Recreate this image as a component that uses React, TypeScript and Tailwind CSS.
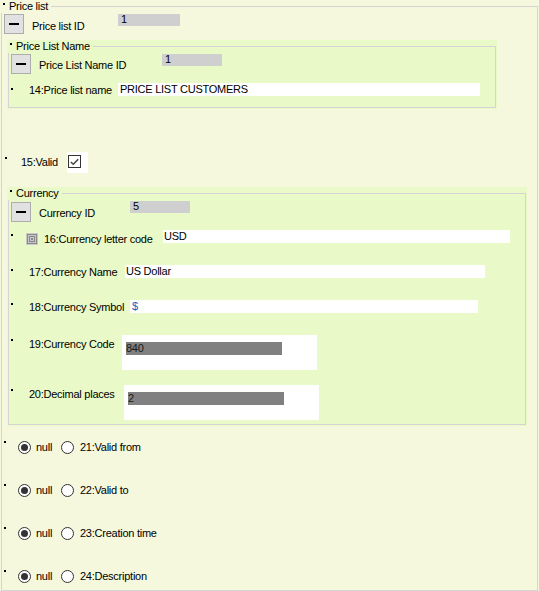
import React from "react";

const Dot = ({ className = "" }: { className?: string }) => (
  <span className={`block w-[2px] h-[2px] bg-black ${className}`} />
);

function Legend({ text, bg }: { text: string; bg: string }) {
  return (
    <div className={`absolute top-0 left-0 flex items-start h-[13px] pr-[3px] ${bg}`}>
      <Dot className="ml-[3px] mt-[3px]" />
      <span className="ml-[4px] leading-[13px]">{text}</span>
    </div>
  );
}

function MinusButton() {
  return (
    <div className="w-[20px] h-[20px] shrink-0 border border-[#adadad] bg-[#e1e1e1] flex items-center justify-center">
      <span className="block w-[10px] h-[2px] bg-black" />
    </div>
  );
}

function IdBox({ value, w }: { value: string; w: string }) {
  return (
    <div className={`${w} h-[12px] bg-[#cfcfcf] pl-[3px] leading-[11px]`}>{value}</div>
  );
}

function Radio({ checked }: { checked?: boolean }) {
  return (
    <span className="w-[13px] h-[13px] shrink-0 rounded-full border border-[#333] bg-white flex items-center justify-center">
      {checked && <span className="block w-[7px] h-[7px] rounded-full bg-[#333]" />}
    </span>
  );
}

function NullRow({ label, first }: { label: string; first?: boolean }) {
  return (
    <div className={`flex items-start h-[14px] ${first ? "mt-[15px]" : "mt-[29px]"}`}>
      <div className="ml-[2px] w-[14px]">
        <Dot />
      </div>
      <Radio checked />
      <span className="w-[30px] pl-[5px] leading-[13px]">null</span>
      <Radio />
      <span className="pl-[6px] leading-[13px]">{label}</span>
    </div>
  );
}

function NumBox({ value }: { value: string }) {
  return (
    <div className="w-[195px] h-[35px] bg-white pt-[7px] pl-[4px]">
      <div className="w-[156px] h-[13px] bg-[#808080] leading-[13px] text-[#1a1a1a]">{value}</div>
    </div>
  );
}

export default function App() {
  return (
    <div className="w-[539px] h-[591px] overflow-hidden bg-[#f5f8dc] font-['Liberation_Sans',Arial,sans-serif] text-[11px] tracking-[-0.25px] text-black">
      {/* Price list group */}
      <div className="relative pt-[6px] pl-px">
        <div className="w-[537px] h-[585px] border border-[#d4d4d4]">
          <div className="flex items-start h-[20px] mt-[7px]">
            <div className="ml-[2px]">
              <MinusButton />
            </div>
            <div className="w-[94px] pl-[8px] self-center pt-[4px]">Price list ID</div>
            <IdBox value="1" w="w-[62px]" />
          </div>

          {/* Price List Name */}
          <div className="relative ml-[5px] mt-[6px] w-[490px] bg-[#e9f9c7] pt-[6px] px-px pb-px">
            <div className="h-[62px] border border-[#d4d4d4]">
              <div className="flex items-start h-[20px] mt-[7px]">
                <div className="ml-[2px]">
                  <MinusButton />
                </div>
                <div className="w-[131px] pl-[8px] self-center pt-[3px]">Price List Name ID</div>
                <IdBox value="1" w="w-[60px]" />
              </div>
              <div className="flex items-start h-[13px] mt-[9px]">
                <div className="ml-[2px] w-[18px]">
                  <Dot className="mt-[5px]" />
                </div>
                <div className="w-[89px] leading-[13px] pt-[1px]">14:Price list name</div>
                <div className="w-[362px] h-[13px] bg-white pl-[2px] leading-[13px]">PRICE LIST CUSTOMERS</div>
              </div>
            </div>
            <Legend text="Price List Name" bg="bg-[#e9f9c7]" />
          </div>

          {/* Valid */}
          <div className="flex items-center h-[21px] mt-[43px]">
            <div className="ml-[3px] w-[16px] self-start">
              <Dot className="mt-[5px]" />
            </div>
            <div className="w-[46px] leading-[13px]">15:Valid</div>
            <div className="w-[21px] h-[21px] bg-white pl-px pt-[3px]">
              <div className="w-[13px] h-[13px] border border-[#333] bg-white flex items-center justify-center">
                <svg width="9" height="8" viewBox="0 0 9 8">
                  <polyline points="0.8,4 3.3,6.3 8.2,1.2" fill="none" stroke="#444" strokeWidth="1.5" />
                </svg>
              </div>
            </div>
          </div>

          {/* Currency */}
          <div className="relative ml-[5px] mt-[14px] w-[520px] bg-[#e9f9c7] pt-[6px] px-px pb-px">
            <div className="h-[232px] border border-[#d4d4d4]">
              <div className="flex items-start h-[20px] mt-[8px]">
                <div className="ml-[2px]">
                  <MinusButton />
                </div>
                <div className="w-[99px] pl-[8px] self-center pt-[2px]">Currency ID</div>
                <div className="-mt-px">
                  <IdBox value="5" w="w-[60px]" />
                </div>
              </div>

              <div className="flex items-start h-[13px] mt-[8px]">
                <div className="ml-[2px] w-[15px]">
                  <Dot className="mt-[4px]" />
                </div>
                <svg className="mt-[3px] shrink-0" width="12" height="12" viewBox="0 0 12 12">
                  <rect x="0" y="0" width="12" height="12" fill="#c8c8c8" />
                  <rect x="1.5" y="1.5" width="9" height="9" fill="none" stroke="#8a8a8a" />
                  <rect x="3.5" y="3.5" width="5" height="5" fill="none" stroke="#8a8a8a" />
                  <rect x="5" y="5" width="2" height="2" fill="#8a8a8a" />
                </svg>
                <div className="w-[125px] pl-[6px] leading-[13px] pt-[3px]">16:Currency letter code</div>
                <div className="w-[347px] h-[13px] bg-white pl-px leading-[13px]">USD</div>
              </div>

              <div className="flex items-start h-[13px] mt-[22px]">
                <div className="ml-[2px] w-[18px]">
                  <Dot className="mt-[4px]" />
                </div>
                <div className="w-[96px] leading-[13px] pt-px">17:Currency Name</div>
                <div className="w-[360px] h-[13px] bg-white pl-px leading-[13px]">US Dollar</div>
              </div>

              <div className="flex items-start h-[13px] mt-[22px]">
                <div className="ml-[2px] w-[18px]">
                  <Dot className="mt-[3px]" />
                </div>
                <div className="w-[101px] leading-[13px] pt-px">18:Currency Symbol</div>
                <div className="w-[348px] h-[13px] bg-white pl-[2px] leading-[13px] text-[#1060c0]">$</div>
              </div>

              <div className="flex items-start h-[35px] mt-[22px]">
                <div className="ml-[2px] w-[18px]">
                  <Dot className="mt-[4px]" />
                </div>
                <div className="w-[93px] leading-[13px] pt-[3px]">19:Currency Code</div>
                <NumBox value="840" />
              </div>

              <div className="flex items-start h-[35px] mt-[15px]">
                <div className="ml-[2px] w-[18px]">
                  <Dot className="mt-[4px]" />
                </div>
                <div className="w-[95px] leading-[13px] pt-[3px]">20:Decimal places</div>
                <NumBox value="2" />
              </div>
            </div>
            <Legend text="Currency" bg="bg-[#e9f9c7]" />
          </div>

          <NullRow label="21:Valid from" first />
          <NullRow label="22:Valid to" />
          <NullRow label="23:Creation time" />
          <NullRow label="24:Description" />
        </div>
        <Legend text="Price list" bg="bg-[#f5f8dc]" />
      </div>
    </div>
  );
}
